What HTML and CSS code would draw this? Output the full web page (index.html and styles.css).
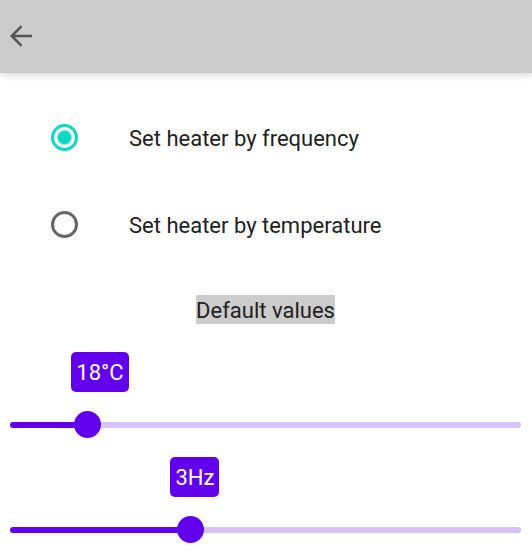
FILE: index.html
```html
<!DOCTYPE html>
<html lang="en">
<head>
  <meta charset="utf-8">
  <meta name="viewport" content="width=device-width, initial-scale=1">
  <title>Heater settings</title>
  <link rel="stylesheet" href="styles.css">
</head>
<body>
  <header class="app-bar">
    <button class="back" type="button" aria-label="Back">
      <svg viewBox="0 0 22 22" width="22" height="22" aria-hidden="true">
        <path d="M11.500 1.200 1.800 11l9.700 9.800M2 11h20" fill="none" stroke="currentColor" stroke-width="2.600"/>
      </svg>
    </button>
  </header>
  <main class="settings">
    <div class="modes" role="radiogroup" aria-label="Heater mode">
      <label class="mode"><input type="radio" name="mode" checked><span>Set heater by frequency</span></label>
      <label class="mode"><input type="radio" name="mode"><span>Set heater by temperature</span></label>
    </div>
    <h1 class="heading">Default values</h1>
    <div class="sliders">
      <div class="field" style="--fill: 15%; --bubble: 12%">
        <output class="bubble" for="temperature">18°C</output>
        <div class="slider"><input id="temperature" type="range" aria-label="Default temperature" min="15" max="35" value="18"></div>
      </div>
      <div class="field" style="--fill: 35%; --bubble: 31.4%">
        <output class="bubble" for="frequency">3Hz</output>
        <div class="slider"><input id="frequency" type="range" aria-label="Default frequency" min="0" max="8.5" step="0.05" value="3"></div>
      </div>
    </div>
  </main>
</body>
</html>
```
FILE: styles.css
```css
* {
  box-sizing: border-box;
}

body {
  margin: 0;
  overflow-x: hidden;
  background: #fff;
  color: #212121;
  font: 400 22px/29px Roboto, sans-serif;
}

.app-bar {
  display: flex;
  align-items: center;
  height: 73px;
  padding: 0 10px 2px;
  background: #ccc;
  box-shadow: 0 1px 8px rgb(0 0 0 / 20%);
}

.back {
  display: flex;
  padding: 0;
  border: 0;
  background: none;
  color: #555;
}

.settings {
  padding: 21px 11px 10px 10px;
}

.mode {
  display: flex;
  align-items: center;
  gap: 51px;
  height: 87px;
  padding-left: 41px;
}

.mode span {
  padding-top: 2px;
}

.mode input {
  appearance: none;
  flex: none;
  width: 27px;
  height: 27px;
  margin: 0;
  border: 3px solid #666;
  border-radius: 50%;
}

.mode input:checked {
  border-color: #10d8c4;
  background: radial-gradient(circle, #10d8c4 6px, transparent 8px);
}

.heading {
  width: fit-content;
  margin: 27px auto 28px;
  padding-top: 2px;
  background: #ccc;
  font-size: 22px;
  font-weight: 400;
  line-height: 27px;
}

.sliders,
.field {
  display: grid;
  gap: 19px;
}

.bubble {
  justify-self: start;
  margin-left: var(--bubble);
  padding: 2px 5px 0;
  border-radius: 5px;
  background: #6200ee;
  color: #fff;
  line-height: 38px;
}

.slider {
  display: flex;
  align-items: center;
  height: 27px;
}

.slider::before {
  content: "";
  width: 100%;
  height: 6px;
  flex: none;
  border-radius: 3px;
  background: linear-gradient(to right, #6200ee var(--fill), #d8c2fa var(--fill));
}

/* The range extends half a thumb past each end of the visible track. */
.slider input {
  appearance: none;
  flex: none;
  width: calc(100% + 27px);
  height: 27px;
  margin: 0 -14px 0 calc(-100% - 13px);
  background: transparent;
}

.slider input::-webkit-slider-thumb {
  appearance: none;
  width: 27px;
  height: 27px;
  border: 0;
  border-radius: 50%;
  background: #6200ee;
}

.slider input::-moz-range-thumb {
  width: 27px;
  height: 27px;
  border: 0;
  border-radius: 50%;
  background: #6200ee;
}
```
